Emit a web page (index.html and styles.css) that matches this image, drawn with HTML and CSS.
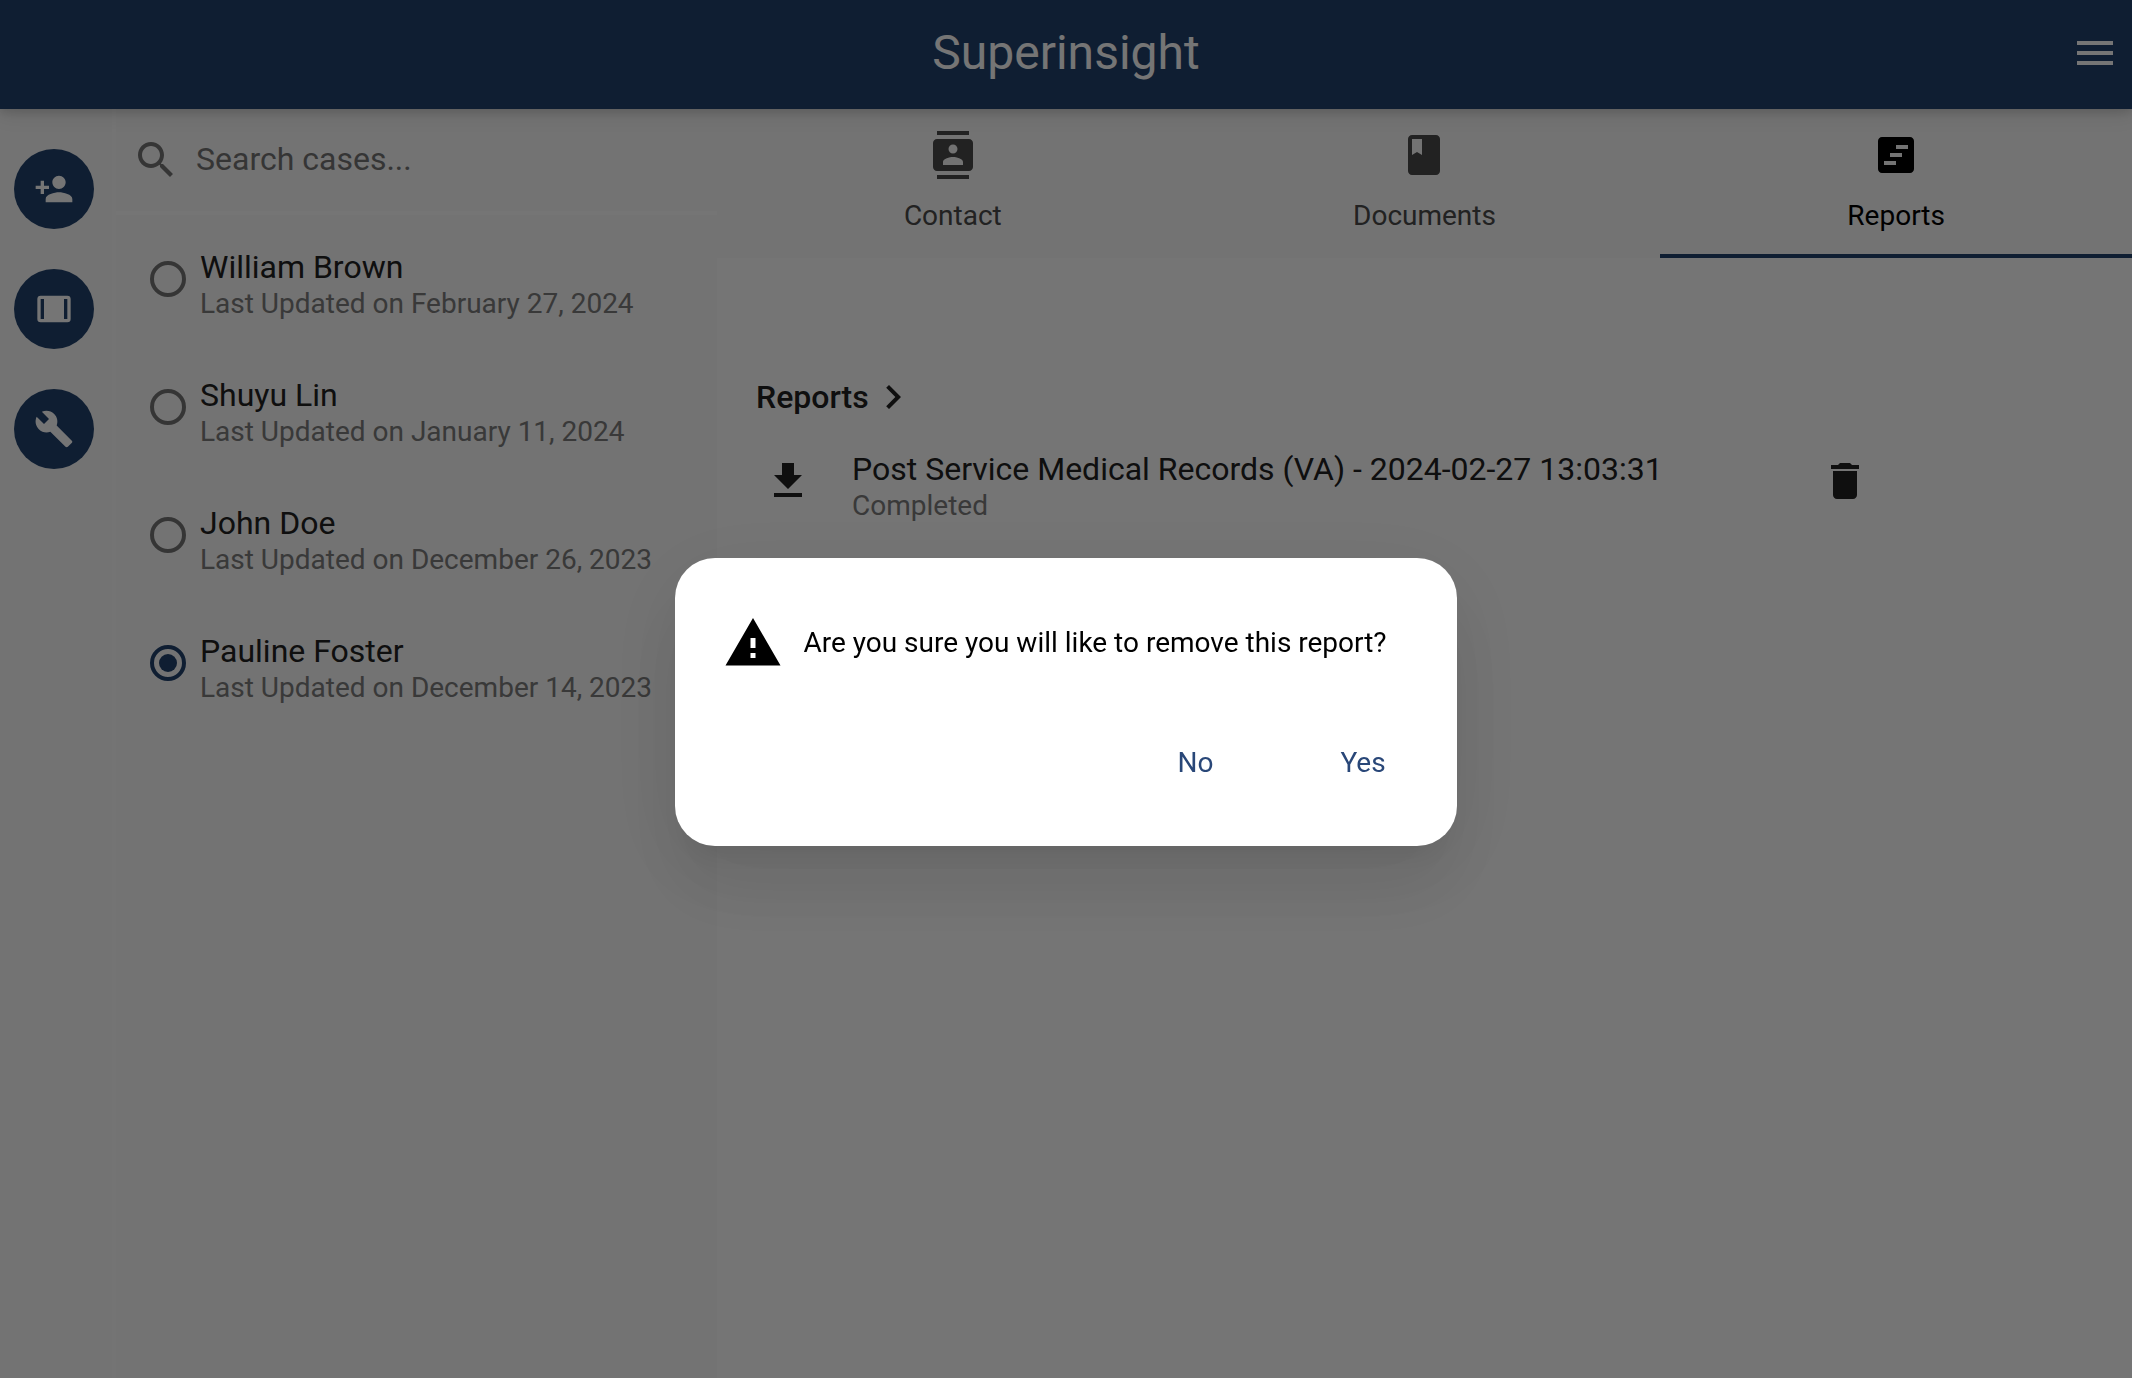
FILE: index.html
```html
<!DOCTYPE html>
<html lang="en">
<head>
<meta charset="utf-8">
<meta name="viewport" content="width=device-width, initial-scale=1">
<title>Superinsight</title>
<link rel="stylesheet" href="styles.css">
</head>
<body>
<div class="app">
  <header class="app-bar">
    <h1 class="app-title">Superinsight</h1>
    <button class="icon-button menu-button" type="button" aria-label="Menu">
      <svg class="icon" viewBox="0 0 24 24"><path d="M3 18h18v-2H3v2zm0-5h18v-2H3v2zm0-7v2h18V6H3z"/></svg>
    </button>
  </header>
  <div class="workspace">
    <nav class="rail" aria-label="Actions">
      <button class="fab" type="button" aria-label="Add person">
        <svg viewBox="0 0 24 24"><path d="M15 12c2.21 0 4-1.79 4-4s-1.790-4-4-4-4 1.790-4 4 1.790 4 4 4zm-9-2V7H4v3H1v2h3v3h2v-3h3v-2H6zm9 4c-2.670 0-8 1.340-8 4v2h16v-2c0-2.660-5.330-4-8-4z"/></svg>
      </button>
      <button class="fab" type="button" aria-label="Panels">
        <svg viewBox="0 0 24 24"><path fill-rule="evenodd" d="M4 4h16a2 2 0 0 1 2 2v12a2 2 0 0 1-2 2H4a2 2 0 0 1-2-2V6a2 2 0 0 1 2-2zM4 6v12h2V6zM18 6v12h2V6z"/></svg>
      </button>
      <button class="fab" type="button" aria-label="Tools">
        <svg viewBox="0 0 24 24"><path d="M22.700 19l-9.100-9.100c.9-2.300.4-5-1.500-6.900-2-2-5-2.400-7.400-1.300L9 6 6 9 1.600 4.700C.4 7.100.9 10.100 2.900 12.100c1.900 1.900 4.600 2.400 6.900 1.500l9.100 9.100c.4.4 1 .4 1.400 0l2.300-2.300c.5-.4.5-1.100.1-1.400z"/></svg>
      </button>
    </nav>
    <aside class="cases">
      <label class="search">
        <svg class="icon" viewBox="0 0 24 24"><path d="M15.500 14h-.79l-.28-.27C15.410 12.590 16 11.110 16 9.500 16 5.910 13.090 3 9.500 3S3 5.910 3 9.500 5.910 16 9.500 16c1.610 0 3.090-.59 4.230-1.570l.27.28v.79l5 4.990L20.490 19l-4.990-5zm-6 0C7.010 14 5 11.990 5 9.500S7.010 5 9.500 5 14 7.010 14 9.500 11.990 14 9.500 14z"/></svg>
        <input class="search-input" type="text" placeholder="Search cases..." aria-label="Search cases">
      </label>
      <div class="case-list">
        <label class="case">
          <input class="radio" type="radio" name="case">
          <span class="two-line"><span class="primary">William Brown</span><span class="secondary">Last Updated on February 27, 2024</span></span>
        </label>
        <label class="case">
          <input class="radio" type="radio" name="case">
          <span class="two-line"><span class="primary">Shuyu Lin</span><span class="secondary">Last Updated on January 11, 2024</span></span>
        </label>
        <label class="case">
          <input class="radio" type="radio" name="case">
          <span class="two-line"><span class="primary">John Doe</span><span class="secondary">Last Updated on December 26, 2023</span></span>
        </label>
        <label class="case">
          <input class="radio" type="radio" name="case" checked>
          <span class="two-line"><span class="primary">Pauline Foster</span><span class="secondary">Last Updated on December 14, 2023</span></span>
        </label>
      </div>
    </aside>
    <main class="detail">
      <div class="tabs" role="tablist">
        <button class="tab" type="button" role="tab" aria-selected="false">
          <svg class="icon" viewBox="0 0 24 24"><path d="M20 0H4v2h16V0zM4 24h16v-2H4v2zM20 4H4c-1.100 0-2 .9-2 2v12c0 1.100.9 2 2 2h16c1.100 0 2-.9 2-2V6c0-1.100-.9-2-2-2zm-8 2.750c1.240 0 2.250 1.010 2.250 2.250s-1.010 2.250-2.250 2.250S9.750 10.240 9.750 9 10.760 6.750 12 6.750zM17 17H7v-1.500c0-1.670 3.330-2.500 5-2.500s5 .83 5 2.500V17z"/></svg>
          <span>Contact</span>
        </button>
        <button class="tab" type="button" role="tab" aria-selected="false">
          <svg class="icon" viewBox="0 0 24 24"><path d="M18 2H6c-1.100 0-2 .9-2 2v16c0 1.100.9 2 2 2h12c1.100 0 2-.9 2-2V4c0-1.100-.9-2-2-2zM6 4h5v8l-2.500-1.500L6 12V4z"/></svg>
          <span>Documents</span>
        </button>
        <button class="tab tab-active" type="button" role="tab" aria-selected="true">
          <svg class="icon" viewBox="0 0 24 24"><path fill-rule="evenodd" d="M19 3H5c-1.100 0-2 .9-2 2v14c0 1.100.9 2 2 2h14c1.100 0 2-.9 2-2V5c0-1.100-.9-2-2-2zM12 17H6v-2h6zM15 13H9v-2h6zM18 9h-6V7h6z"/></svg>
          <span>Reports</span>
        </button>
      </div>
      <section class="reports">
        <h2 class="section-title">Reports
          <svg class="icon" viewBox="0 0 24 24"><path d="M10 6L8.590 7.410 13.170 12l-4.580 4.590L10 18l6-6z"/></svg>
        </h2>
        <div class="report">
          <button class="icon-button" type="button" aria-label="Download report">
            <svg class="icon" viewBox="0 0 24 24"><path d="M19 9h-4V3H9v6H5l7 7 7-7zM5 18v2h14v-2H5z"/></svg>
          </button>
          <div class="two-line report-text"><span class="primary">Post Service Medical Records (VA) - 2024-02-27 13:03:31</span><span class="secondary">Completed</span></div>
          <button class="icon-button" type="button" aria-label="Delete report">
            <svg class="icon" viewBox="0 0 24 24"><path d="M6 19c0 1.100.9 2 2 2h8c1.100 0 2-.9 2-2V7H6v12zM19 4h-3.500l-1-1h-5l-1 1H5v2h14V4z"/></svg>
          </button>
        </div>
      </section>
    </main>
  </div>
</div>
<div class="scrim">
  <div class="dialog" role="alertdialog" aria-modal="true" aria-labelledby="dialog-message">
    <div class="dialog-body">
      <svg class="warning" viewBox="0 0 24 24"><path d="M1 21h22L12 2 1 21zm12-3h-2v-2h2v2zm0-4h-2v-4h2v4z"/></svg>
      <p class="dialog-message" id="dialog-message">Are you sure you will like to remove this report?</p>
    </div>
    <div class="dialog-actions">
      <button class="text-button" type="button">No</button>
      <button class="text-button" type="button">Yes</button>
    </div>
  </div>
</div>
</body>
</html>
```
FILE: styles.css
```css
:root {
  --primary: #21426e;
  --surface: #fafafa;
  --ink: #222;
  --muted: #757575;
}

* {
  box-sizing: border-box;
}

body {
  margin: 0;
  font-family: Roboto, "Liberation Sans", sans-serif;
  font-size: 28px;
  line-height: 34px;
  color: var(--ink);
  background: #fff;
}

button {
  margin: 0;
  padding: 0;
  border: 0;
  background: none;
  font: inherit;
  color: inherit;
}

svg {
  display: block;
  fill: currentColor;
}

.icon {
  width: 48px;
  height: 48px;
  flex: none;
}

.app {
  display: flex;
  flex-direction: column;
  min-height: 100vh;
}

/* App bar */
.app-bar {
  display: grid;
  grid-template-columns: 1fr auto 1fr;
  align-items: center;
  padding: 25px 13px 28px;
  position: relative;
  background: var(--primary);
  color: #fff;
  box-shadow: 0 4px 8px rgba(0, 0, 0, .1), 0 4px 20px rgba(0, 0, 0, .12);
}

.app-title {
  grid-column: 2;
  margin: 0;
  font-size: 48px;
  line-height: 56px;
  font-weight: 400;
}

.menu-button {
  justify-self: end;
}

.workspace {
  flex: 1;
  display: flex;
}

/* Action rail */
.rail {
  width: 116px;
  padding: 40px 14px;
  display: flex;
  flex-direction: column;
  gap: 40px;
  background: var(--surface);
  border-right: 4px solid #fdfdfd;
}

.fab {
  width: 80px;
  height: 80px;
  display: grid;
  place-items: center;
  border-radius: 50%;
  background: var(--primary);
  color: #fff;
}

.fab svg {
  width: 40px;
  height: 40px;
}

/* Case list */
.cases {
  width: 601px;
  background: var(--surface);
}

.search {
  display: flex;
  align-items: center;
  gap: 16px;
  height: 102px;
  padding: 0 16px;
  color: var(--muted);
}

.search-input {
  flex: 1;
  min-width: 0;
  padding: 0 0 2px;
  border: 0;
  outline: 0;
  background: none;
  font: inherit;
  font-size: 32px;
  line-height: 36px;
  color: var(--ink);
}

.search-input::placeholder {
  color: var(--muted);
  opacity: 1;
}

.case-list {
  display: flex;
  flex-direction: column;
  gap: 56px;
  padding: 34px;
  border-top: 4px solid #fff;
}

.case {
  display: flex;
  gap: 14px;
}

.radio {
  appearance: none;
  flex: none;
  width: 36px;
  height: 36px;
  margin: 12px 0 0;
  display: grid;
  place-items: center;
  border: 4px solid var(--muted);
  border-radius: 50%;
}

.radio:checked {
  border-color: var(--primary);
}

.radio:checked::before {
  content: "";
  width: 18px;
  height: 18px;
  border-radius: 50%;
  background: var(--primary);
}

.two-line {
  display: flex;
  flex-direction: column;
  gap: 2px;
}

.primary {
  font-size: 32px;
  line-height: 36px;
}

.secondary {
  color: #7c7c7c;
}

/* Detail pane */
.detail {
  flex: 1;
  min-width: 0;
}

.tabs {
  display: grid;
  grid-template-columns: repeat(3, 1fr);
  background: var(--surface);
}

.tab {
  display: flex;
  flex-direction: column;
  align-items: center;
  gap: 20px;
  padding: 22px 0 21px;
  border-bottom: 4px solid transparent;
  color: #4a4a4a;
}

.tab-active {
  border-bottom-color: var(--primary);
  color: #000;
}

.reports {
  padding: 115px 263px 48px 39px;
}

.section-title {
  display: flex;
  align-items: center;
  margin: 0 0 30px;
  font-size: 32px;
  line-height: 36px;
  font-weight: 500;
}

.report {
  display: flex;
  align-items: flex-start;
  padding-left: 8px;
}

.report .icon-button {
  padding-top: 6px;
}

.report-text {
  flex: 1;
  padding-left: 40px;
}

/* Confirmation dialog */
.scrim {
  position: fixed;
  inset: 0;
  display: flex;
  align-items: center;
  justify-content: center;
  padding-top: 25px;
  background: rgba(0, 0, 0, .54);
}

.dialog {
  padding: 55px 70px 56px 48px;
  border-radius: 40px;
  background: #fff;
  color: #000;
  box-shadow: 0 22px 30px -14px rgba(0, 0, 0, .08), 0 48px 76px 6px rgba(0, 0, 0, .06), 0 18px 92px 16px rgba(0, 0, 0, .06);
}

.dialog-body {
  display: flex;
  align-items: center;
  gap: 20px;
}

.warning {
  width: 60px;
  height: 60px;
  flex: none;
}

.dialog-message {
  margin: 0;
}

.dialog-actions {
  display: flex;
  justify-content: flex-end;
  gap: 127px;
  padding: 73px 1px 10px 0;
  color: #294778;
}
```
